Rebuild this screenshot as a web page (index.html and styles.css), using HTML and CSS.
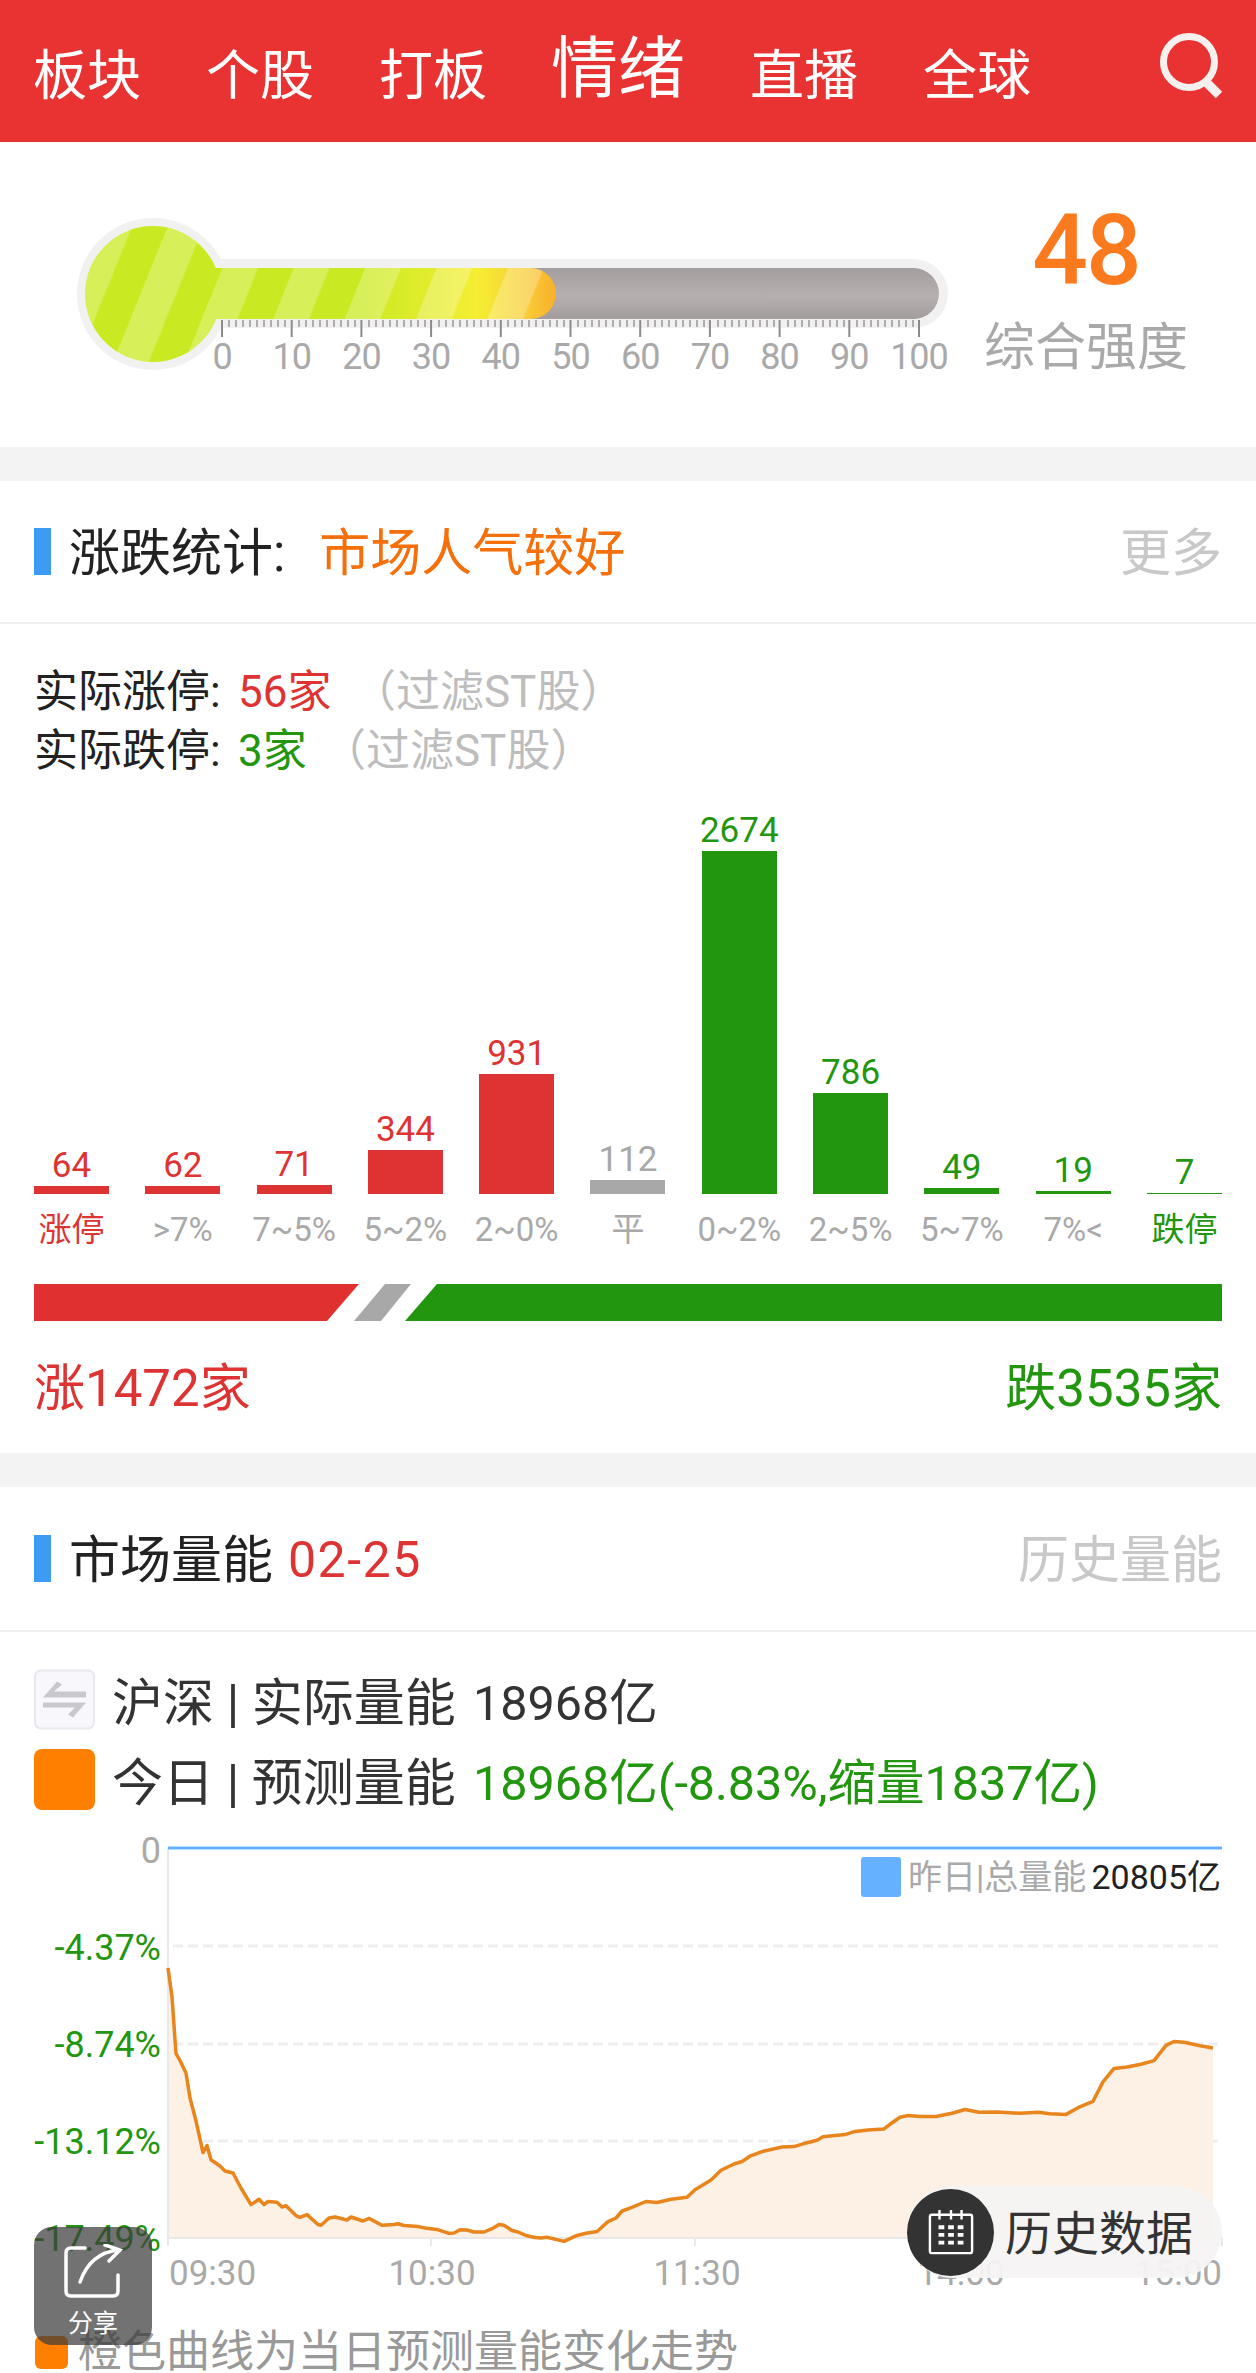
FILE: index.html
```html
<!DOCTYPE html>
<html lang="zh-CN">
<head>
  <meta charset="UTF-8">
  <meta name="viewport" content="width=device-width, initial-scale=1.0">
  <title>情绪</title>
  <link rel="stylesheet" href="styles.css">
</head>
<body>
  <header class="topbar">
    <nav class="tabs">
      <a class="tab">板块</a>
      <a class="tab">个股</a>
      <a class="tab">打板</a>
      <a class="tab tab-active">情绪</a>
      <a class="tab">直播</a>
      <a class="tab">全球</a>
    </nav>
    <svg class="search-icon" viewBox="0 0 70 70">
      <circle cx="30" cy="29" r="25.5" fill="none" stroke="#f6f0ee" stroke-width="7"/>
      <path d="M48 50 L60 62" fill="none" stroke="#f6f0ee" stroke-width="9"/>
    </svg>
  </header>

  <section class="hero">
    <!-- thermometer, drawn in its own 70..960 x 210..380 box -->
    <svg class="thermo" viewBox="70 210 890 170">
      <defs>
        <linearGradient id="tubeGray" x1="0" y1="0" x2="0" y2="1">
          <stop offset="0" stop-color="#a49e9e"/>
          <stop offset=".55" stop-color="#b5afaf"/>
          <stop offset="1" stop-color="#a29c9c"/>
        </linearGradient>
        <linearGradient id="heat" gradientUnits="userSpaceOnUse" x1="89" y1="0" x2="556" y2="0">
          <stop offset="0" stop-color="#c9ea22"/>
          <stop offset=".58" stop-color="#c9ea22"/>
          <stop offset=".74" stop-color="#e4ec2e"/>
          <stop offset=".83" stop-color="#f5ee32"/>
          <stop offset=".93" stop-color="#f8cf3a"/>
          <stop offset="1" stop-color="#f9b02a"/>
        </linearGradient>
        <pattern id="stripes" patternUnits="userSpaceOnUse" width="66.2" height="20" patternTransform="translate(151 268) rotate(22)">
          <rect width="33.1" height="20" fill="#fff" fill-opacity=".25"/>
        </pattern>
      </defs>
      <rect x="153" y="259" width="795" height="69" rx="34.5" fill="#f1f1f1"/>
      <circle cx="153" cy="294" r="76" fill="#f1f1f1"/>
      <rect x="200" y="268" width="739" height="51" rx="25.5" fill="url(#tubeGray)"/>
      <path d="M85 294 a68 68 0 1 1 136 0 a68 68 0 1 1 -136 0 Z M200 268 H530.5 A25.5 25.5 0 0 1 530.5 319 H200 Z" fill="url(#heat)"/>
      <path d="M85 294 a68 68 0 1 1 136 0 a68 68 0 1 1 -136 0 Z M200 268 H530.5 A25.5 25.5 0 0 1 530.5 319 H200 Z" fill="url(#stripes)"/>
      <g class="tick-minor">
        <path d="M229 320v7M236 320v7M243 320v7M250 320v7M257 320v7M264 320v7M271 320v7M278 320v7M285 320v7M299 320v7M306 320v7M313 320v7M320 320v7M327 320v7M334 320v7M341 320v7M348 320v7M355 320v7M369 320v7M376 320v7M383 320v7M390 320v7M397 320v7M404 320v7M411 320v7M418 320v7M425 320v7M439 320v7M446 320v7M453 320v7M460 320v7M467 320v7M474 320v7M481 320v7M488 320v7M495 320v7M508 320v7M515 320v7M522 320v7M529 320v7M536 320v7M543 320v7M550 320v7M557 320v7M564 320v7M578 320v7M585 320v7M592 320v7M599 320v7M606 320v7M613 320v7M620 320v7M627 320v7M634 320v7M648 320v7M655 320v7M662 320v7M669 320v7M676 320v7M683 320v7M690 320v7M697 320v7M704 320v7M718 320v7M725 320v7M732 320v7M739 320v7M746 320v7M753 320v7M760 320v7M767 320v7M774 320v7M788 320v7M795 320v7M802 320v7M809 320v7M816 320v7M823 320v7M830 320v7M837 320v7M844 320v7M857 320v7M864 320v7M871 320v7M878 320v7M885 320v7M892 320v7M899 320v7M906 320v7M913 320v7"/>
      </g>
      <g class="tick-major">
        <path d="M222 320v17M291.7 320v17M361.4 320v17M431.1 320v17M500.8 320v17M570.5 320v17M640.2 320v17M709.9 320v17M779.6 320v17M849.3 320v17M919 320v17"/>
      </g>
      <g class="tick-label">
        <text x="222" y="369">0</text>
        <text x="291.7" y="369">10</text>
        <text x="361.4" y="369">20</text>
        <text x="431.1" y="369">30</text>
        <text x="500.8" y="369">40</text>
        <text x="570.5" y="369">50</text>
        <text x="640.2" y="369">60</text>
        <text x="709.9" y="369">70</text>
        <text x="779.6" y="369">80</text>
        <text x="849.3" y="369">90</text>
        <text x="919" y="369">100</text>
      </g>
    </svg>
    <div class="score">
      <div class="score-num">48</div>
      <div class="score-label">综合强度</div>
    </div>
  </section>

  <section class="panel panel-updown">
    <div class="panel-head">
      <span class="head-mark"></span>
      <span class="head-title">涨跌统计:</span>
      <span class="head-mood">市场人气较好</span>
      <a class="head-more">更多</a>
    </div>
    <div class="stat-rows">
      <p class="stat"><span class="stat-name">实际涨停:</span><b class="up up-count">56家</b><span class="stat-note">（过滤ST股）</span></p>
      <p class="stat"><span class="stat-name">实际跌停:</span><b class="down down-count">3家</b><span class="stat-note">（过滤ST股）</span></p>
    </div>

    <div class="bars">
      <div class="bar-col up"><span class="bar-val">64</span><i class="bar" style="height:8px"></i><span class="bar-name">涨停</span></div>
      <div class="bar-col up plain"><span class="bar-val">62</span><i class="bar" style="height:8px"></i><span class="bar-name">&gt;7%</span></div>
      <div class="bar-col up plain"><span class="bar-val">71</span><i class="bar" style="height:9px"></i><span class="bar-name">7~5%</span></div>
      <div class="bar-col up plain"><span class="bar-val">344</span><i class="bar" style="height:44px"></i><span class="bar-name">5~2%</span></div>
      <div class="bar-col up plain"><span class="bar-val">931</span><i class="bar" style="height:120px"></i><span class="bar-name">2~0%</span></div>
      <div class="bar-col flat plain"><span class="bar-val">112</span><i class="bar" style="height:14px"></i><span class="bar-name">平</span></div>
      <div class="bar-col down plain"><span class="bar-val">2674</span><i class="bar" style="height:343px"></i><span class="bar-name">0~2%</span></div>
      <div class="bar-col down plain"><span class="bar-val">786</span><i class="bar" style="height:101px"></i><span class="bar-name">2~5%</span></div>
      <div class="bar-col down plain"><span class="bar-val">49</span><i class="bar" style="height:6px"></i><span class="bar-name">5~7%</span></div>
      <div class="bar-col down plain"><span class="bar-val">19</span><i class="bar" style="height:3px"></i><span class="bar-name">7%&lt;</span></div>
      <div class="bar-col down"><span class="bar-val">7</span><i class="bar" style="height:1px"></i><span class="bar-name">跌停</span></div>
    </div>

    <svg class="split" viewBox="0 0 1188 37">
      <polygon points="0,0 325,0 293,37 0,37" fill="#e03030"/>
      <polygon points="351,0 377,0 347,37 320,37" fill="#a8a8a8"/>
      <polygon points="403,0 1188,0 1188,37 371,37" fill="#23960f"/>
    </svg>

    <div class="totals">
      <span class="up">涨1472家</span>
      <span class="down">跌3535家</span>
    </div>
  </section>

  <section class="panel panel-volume">
    <div class="panel-head">
      <span class="head-mark"></span>
      <span class="head-title">市场量能</span>
      <span class="head-date">02-25</span>
      <a class="head-more">历史量能</a>
    </div>

    <div class="vol-rows">
      <div class="vol-row">
        <svg class="vol-swatch" viewBox="0 0 61 60">
          <rect x="1" y="1" width="59" height="58" rx="6" fill="#f8f8fc" stroke="#e8e8ee" stroke-width="2"/>
          <path d="M9 28 L23 12 L28 15 L20 22 H52 V28 Z M9 33 H52 L39 48 L34 45 L41 38 H9 Z" fill="#c9c9cd"/>
        </svg>
        <span class="vol-name">沪深 | 实际量能</span>
        <span class="vol-val">18968亿</span>
      </div>
      <div class="vol-row">
        <span class="vol-swatch vol-swatch-orange"></span>
        <span class="vol-name">今日 | 预测量能</span>
        <span class="vol-val down">18968亿(-8.83%,缩量1837亿)</span>
      </div>
    </div>

    <svg class="vol-chart" viewBox="0 0 1256 506">
      <path class="grid" d="M173 126H1218M173 224H1218M173 321H1218"/>
      <path class="area" d="M168 148 172 177 176 233.5 180 240.6 186 253 190 278 196 301 203 332.6 207 325.5 211 339.7 220 346 225 351 233 353 241 368 251 384.6 259 379.3 264 384.6 268 381.5 277 382.2 282 387 286 385.7 296 395.6 300 397.4 307 394.6 318 404.5 321 405.2 329 398 335 397 347 400 351 397 363 401 369 398.4 382 405.2 394 404.5 398 403.7 404 405.5 418 406.6 425 408 437 409.4 449 413.3 454 413 460 409.8 467 410 474 412 484 412 492 408.7 499 404.5 504 405.2 512 410.5 518 412 527 415.8 535 417.5 541 418 547 417.2 564 421.4 576 415.8 586 413.3 597 411.5 608 401.6 616 398 622 391 630 388.2 646 381.5 657 382.5 671 379.3 687 377.2 695 369.8 711 360 721 350.3 734 344 742 341.5 750 336.2 762 331.6 782 327 794 326.6 803 323.8 817 320.2 823 316.7 845 314.6 855 311.4 868 310 884 308.9 890 304.3 900 297.2 908 295.5 920 296.5 936 296.5 953 293 965 289.5 979 292.3 997 291.9 1020 293.3 1038 292.3 1050 293.7 1066 294.4 1078 287.7 1093 281.3 1103 261.9 1114 248.4 1127 247 1141 244.2 1154 240.6 1166 225.4 1174 221.5 1184 222.2 1200 225.8 1213 227.9 V418 H168 Z"/>
      <path class="axis" d="M168 28V426M168 418H1222M431 418V426M695 418V426M959 418V426M1222 418V426"/>
      <path class="zero-line" d="M168 28H1222"/>
      <path class="curve" d="M168 148 172 177 176 233.5 180 240.6 186 253 190 278 196 301 203 332.6 207 325.5 211 339.7 220 346 225 351 233 353 241 368 251 384.6 259 379.3 264 384.6 268 381.5 277 382.2 282 387 286 385.7 296 395.6 300 397.4 307 394.6 318 404.5 321 405.2 329 398 335 397 347 400 351 397 363 401 369 398.4 382 405.2 394 404.5 398 403.7 404 405.5 418 406.6 425 408 437 409.4 449 413.3 454 413 460 409.8 467 410 474 412 484 412 492 408.7 499 404.5 504 405.2 512 410.5 518 412 527 415.8 535 417.5 541 418 547 417.2 564 421.4 576 415.8 586 413.3 597 411.5 608 401.6 616 398 622 391 630 388.2 646 381.5 657 382.5 671 379.3 687 377.2 695 369.8 711 360 721 350.3 734 344 742 341.5 750 336.2 762 331.6 782 327 794 326.6 803 323.8 817 320.2 823 316.7 845 314.6 855 311.4 868 310 884 308.9 890 304.3 900 297.2 908 295.5 920 296.5 936 296.5 953 293 965 289.5 979 292.3 997 291.9 1020 293.3 1038 292.3 1050 293.7 1066 294.4 1078 287.7 1093 281.3 1103 261.9 1114 248.4 1127 247 1141 244.2 1154 240.6 1166 225.4 1174 221.5 1184 222.2 1200 225.8 1213 227.9"/>
      <text class="y-zero" x="161" y="43">0</text>
      <g class="y-label">
        <text x="161" y="140">-4.37%</text>
        <text x="161" y="237">-8.74%</text>
        <text x="161" y="334">-13.12%</text>
        <text x="161" y="431">-17.49%</text>
      </g>
      <g class="x-label">
        <text x="169" y="465">09:30</text>
        <text x="432" y="465" text-anchor="middle">10:30</text>
        <text x="697" y="465" text-anchor="middle">11:30</text>
        <text x="961" y="465" text-anchor="middle">14:00</text>
        <text x="1222" y="465" text-anchor="end">15:00</text>
      </g>
      <rect x="861" y="37" width="40" height="40" rx="3" fill="#66b1ff"/>
      <text class="legend-name" x="908" y="69">昨日|总量能</text>
      <text class="legend-val" x="1221" y="69" text-anchor="end">20805亿</text>
    </svg>

    <p class="note"><span class="note-mark"></span>橙色曲线为当日预测量能变化走势</p>
  </section>

  <!-- floating buttons over the chart -->
  <a class="share">
    <svg class="share-icon" viewBox="0 0 60 58">
      <path d="M22 4H8 Q3 4 3 9V47 Q3 52 8 52H50 Q55 52 55 47V31" fill="none" stroke="#fff" stroke-width="3.5" stroke-linecap="round"/>
      <path d="M17 38 C24 18 37 8 55 6 M42 1 L57 6 L46 17" fill="none" stroke="#fff" stroke-width="3.5" stroke-linecap="round"/>
    </svg>
    <span class="share-text">分享</span>
  </a>

  <a class="history">
    <span class="history-dot">
      <svg viewBox="0 0 48 48" class="history-icon">
        <rect x="2" y="6" width="44" height="40" rx="2" fill="none" stroke="#fff" stroke-width="2.5"/>
        <path d="M12 1V11M24 1V11M35 1V11" stroke="#fff" stroke-width="2.5"/>
        <path d="M11 17h6v4h-6zM21 17h6v4h-6zM31 17h6v4h-6zM11 25h6v4h-6zM21 25h6v4h-6zM31 25h6v4h-6zM11 33h6v4h-6zM21 33h6v4h-6zM31 33h6v4h-6z" fill="#fff"/>
      </svg>
    </span>
    <span class="history-text">历史数据</span>
  </a>
</body>
</html>
```

FILE: styles.css
```css
/* general styling */
* {
  box-sizing: border-box;
  margin: 0;
  padding: 0;
}

html, body {
  height: 100%;
}

body {
  background: #f3f3f3;
  color: #222;
  font-family: Roboto, "Noto Sans CJK SC", sans-serif;
  overflow: hidden;
  position: relative;
}

.up { color: #de3333; }
.down { color: #23960f; }

/* top tabs */
.topbar {
  align-items: flex-start;
  background: #e93333;
  display: flex;
  height: 142px;
  justify-content: space-between;
  padding: 0 34px 0 33px;
}

.tabs {
  align-items: center;
  display: flex;
  gap: 65px;
  height: 154px;
}

.tab {
  color: #fff;
  font-size: 54px;
  line-height: 1;
}

.tab-active {
  font-size: 67px;
  margin: -15px 0 0 -1px;
}

.search-icon {
  height: 70px;
  margin: 33px -7px 0 0;
  width: 70px;
}

/* strength gauge */
.hero {
  align-items: center;
  background: #fff;
  display: flex;
  gap: 26px;
  height: 305px;
  padding-left: 70px;
}

.thermo {
  display: block;
  height: 170px;
  width: 890px;
}

.tick-minor path {
  fill: none;
  stroke: #9c9797;
  stroke-width: 1.5;
}

.tick-major path {
  fill: none;
  stroke: #8f8a8a;
  stroke-width: 2;
}

.tick-label text {
  fill: #a9a9a9;
  font-size: 36px;
  letter-spacing: -1px;
  text-anchor: middle;
}

.score {
  padding-bottom: 9px;
  text-align: center;
  width: 200px;
}

.score-num {
  color: #fb7a1e;
  font-size: 98px;
  font-weight: 500;
  letter-spacing: -2px;
  line-height: 100px;
}

.score-label {
  color: #a9a9a9;
  font-size: 51px;
  line-height: 64px;
  margin: 15px -4px 0;
}

/* panels */
.panel {
  background: #fff;
  margin-top: 34px;
}

.panel-updown {
  height: 972px;
}

.panel-volume {
  height: 886px;
}

.panel-head {
  align-items: center;
  border-bottom: 2px solid #eeeeee;
  display: flex;
  font-size: 51px;
  height: 143px;
  padding: 0 34px;
}

.panel-volume .panel-head {
  height: 145px;
}

.head-mark {
  background: #3c9bf5;
  height: 47px;
  margin-right: 18px;
  width: 17px;
}

.head-title,
.head-mood,
.head-more {
  padding-bottom: 6px;
}

.head-mood {
  color: #f56f0a;
  margin-left: 34px;
}

.head-date {
  color: #de3333;
  font-size: 50px;
  letter-spacing: 1.5px;
  margin-left: 15px;
  padding-top: 2px;
}

.head-more {
  color: #c8c8c8;
  margin-left: auto;
}

/* limit up / limit down counts */
.stat-rows {
  padding: 34px 34px 0;
}

.stat {
  align-items: center;
  display: flex;
  font-size: 44px;
  height: 59px;
}

.stat-name {
  width: 204px;
}

.stat b {
  font-weight: 400;
}

.up-count { width: 114px; }
.down-count { width: 84px; }

.stat-note {
  color: #bdbdbd;
  font-size: 44px;
}

/* distribution bars */
.bars {
  display: flex;
  height: 490px;
  justify-content: space-between;
  padding: 0 34px;
}

.bar-col {
  align-items: center;
  display: flex;
  flex-direction: column;
  font-style: normal;
  justify-content: flex-end;
  width: 75px;
}

.bar-val {
  font-size: 35px;
  line-height: 40px;
}

.bar {
  background: currentColor;
  display: block;
  width: 75px;
}

.bar-name {
  font-size: 33px;
  line-height: 40px;
  margin-top: 16px;
  white-space: nowrap;
  margin-bottom: 16px;
}

.plain .bar-name { color: #a9a9a9; }
.flat { color: #a8a8a8; }

.split {
  display: block;
  height: 37px;
  margin: 18px 34px 0;
  width: 1188px;
}

.totals {
  display: flex;
  font-size: 51px;
  justify-content: space-between;
  line-height: 60px;
  margin-top: 38px;
  padding: 0 34px;
}

/* volume rows */
.vol-rows {
  padding: 36px 34px 0;
}

.vol-row {
  align-items: center;
  display: flex;
  font-size: 51px;
  height: 62px;
  margin-bottom: 18px;
  white-space: nowrap;
}

.vol-swatch {
  display: block;
  flex: none;
  height: 61px;
  margin-right: 17px;
  width: 61px;
}

.vol-swatch-orange {
  background: #ff7f00;
  border-radius: 8px;
}

.vol-name {
  color: #333;
  width: 361px;
}

.vol-val {
  color: #333;
  font-size: 48.5px;
}

.vol-val.down {
  color: #23960f;
}

/* volume chart */
.vol-chart {
  display: block;
  height: 506px;
  margin-top: -8px;
  width: 1256px;
}

.vol-chart path {
  fill: none;
}

.vol-chart .grid {
  stroke: #eeeeee;
  stroke-dasharray: 10 5;
  stroke-width: 3;
}

.vol-chart .area {
  fill: #fdf0e4;
}

.vol-chart .axis {
  stroke: #e8e8e8;
  stroke-width: 2;
}

.vol-chart .zero-line {
  stroke: #66b1ff;
  stroke-width: 3;
}

.vol-chart .curve {
  stroke: #e8851c;
  stroke-width: 3.5;
  stroke-linejoin: round;
}

.y-zero {
  fill: #a9a9a9;
  font-size: 36px;
  text-anchor: end;
}

.y-label text {
  fill: #23960f;
  font-size: 36px;
  text-anchor: end;
}

.x-label text {
  fill: #a9a9a9;
  font-size: 35px;
}

.legend-name {
  fill: #a9a9a9;
  font-size: 34px;
}

.legend-val {
  fill: #222;
  font-size: 34px;
}

.note {
  align-items: center;
  color: #999;
  display: flex;
  font-size: 44px;
  line-height: 44px;
  margin-top: 4px;
  padding-left: 35px;
}

.note-mark {
  background: #ff7f00;
  border-radius: 6px;
  height: 33px;
  margin-right: 10px;
  width: 33px;
}

/* floating buttons */
.share {
  align-items: center;
  background: rgba(60, 60, 60, .72);
  border-radius: 18px;
  display: flex;
  flex-direction: column;
  height: 118px;
  left: 34px;
  padding-top: 17px;
  position: absolute;
  top: 2227px;
  width: 118px;
}

.share-icon {
  display: block;
  height: 58px;
  width: 60px;
}

.share-text {
  color: #fff;
  font-size: 25px;
  line-height: 30px;
  margin-top: 7px;
}

.history {
  align-items: center;
  background: rgba(245, 243, 243, .95);
  border-radius: 46px;
  display: flex;
  height: 92px;
  left: 907px;
  position: absolute;
  top: 2186px;
  width: 315px;
}

.history-dot {
  align-items: center;
  background: #333;
  border-radius: 50%;
  display: flex;
  flex: none;
  height: 87px;
  justify-content: center;
  width: 87px;
}

.history-icon {
  display: block;
  height: 46px;
  width: 46px;
}

.history-text {
  color: #333;
  font-size: 47px;
  margin-left: 11px;
  padding-bottom: 5px;
}
```
